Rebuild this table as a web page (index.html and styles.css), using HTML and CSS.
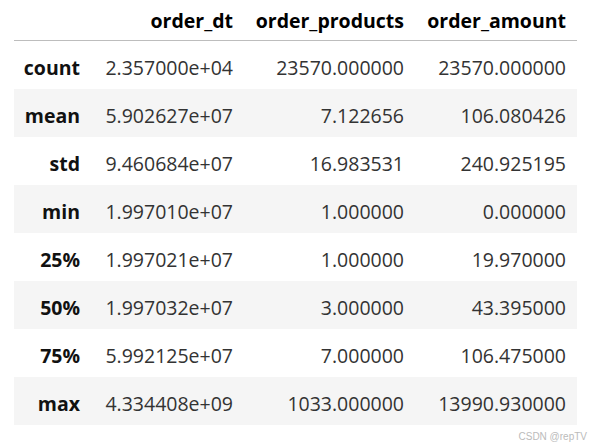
FILE: index.html
```html
<!DOCTYPE html>
<html>
<head>
<meta charset="utf-8">
<link rel="stylesheet" href="styles.css">
</head>
<body>
<div class="page">
<table class="df">
  <colgroup>
    <col class="c-idx">
    <col class="c-dt">
    <col class="c-prod">
    <col class="c-amt">
  </colgroup>
  <thead>
    <tr><th></th><th>order_dt</th><th>order_products</th><th>order_amount</th></tr>
  </thead>
  <tbody>
    <tr><th>count</th><td>2.357000e+04</td><td>23570.000000</td><td>23570.000000</td></tr>
    <tr><th>mean</th><td>5.902627e+07</td><td>7.122656</td><td>106.080426</td></tr>
    <tr><th>std</th><td>9.460684e+07</td><td>16.983531</td><td>240.925195</td></tr>
    <tr><th>min</th><td>1.997010e+07</td><td>1.000000</td><td>0.000000</td></tr>
    <tr><th>25%</th><td>1.997021e+07</td><td>1.000000</td><td>19.970000</td></tr>
    <tr><th>50%</th><td>1.997032e+07</td><td>3.000000</td><td>43.395000</td></tr>
    <tr><th>75%</th><td>5.992125e+07</td><td>7.000000</td><td>106.475000</td></tr>
    <tr><th>max</th><td>4.334408e+09</td><td>1033.000000</td><td>13990.930000</td></tr>
  </tbody>
</table>
<div class="mark">CSDN @repTV</div>
</div>
</body>
</html>
```
FILE: styles.css
```css
html, body {
  margin: 0;
  padding: 0;
  background: #fff;
}
.page {
  position: relative;
  width: 592px;
  height: 446px;
  padding-left: 14px;
  box-sizing: border-box;
  font-family: "Open Sans", "Noto Sans", sans-serif;
}
.df {
  border-collapse: collapse;
  table-layout: fixed;
  width: 563px;
  font-size: 19.5px;
}
.c-idx { width: 77px; }
.c-dt { width: 153px; }
.c-prod { width: 171px; }
.c-amt { width: 162px; }
.df th, .df td {
  text-align: right;
  padding: 0 11px 0 0;
  white-space: nowrap;
}
.df thead th {
  height: 40px;
  border-bottom: 1px solid #bdbdbd;
  font-weight: 700;
  color: #000;
  vertical-align: middle;
}
.df tbody tr {
  height: 48px;
}
.df tbody th,
.df tbody td {
  height: 48px;
  box-sizing: border-box;
  padding-top: 5px;
}
.df tbody th {
  font-weight: 700;
  color: #111;
}
.df tbody td {
  color: #333;
}
.df tbody tr:nth-child(even) {
  background: #f5f5f5;
}
.mark {
  position: absolute;
  right: 5px;
  bottom: 4px;
  font-family: "Liberation Sans", Arial, sans-serif;
  font-size: 10px;
  color: #bbb;
}
```
